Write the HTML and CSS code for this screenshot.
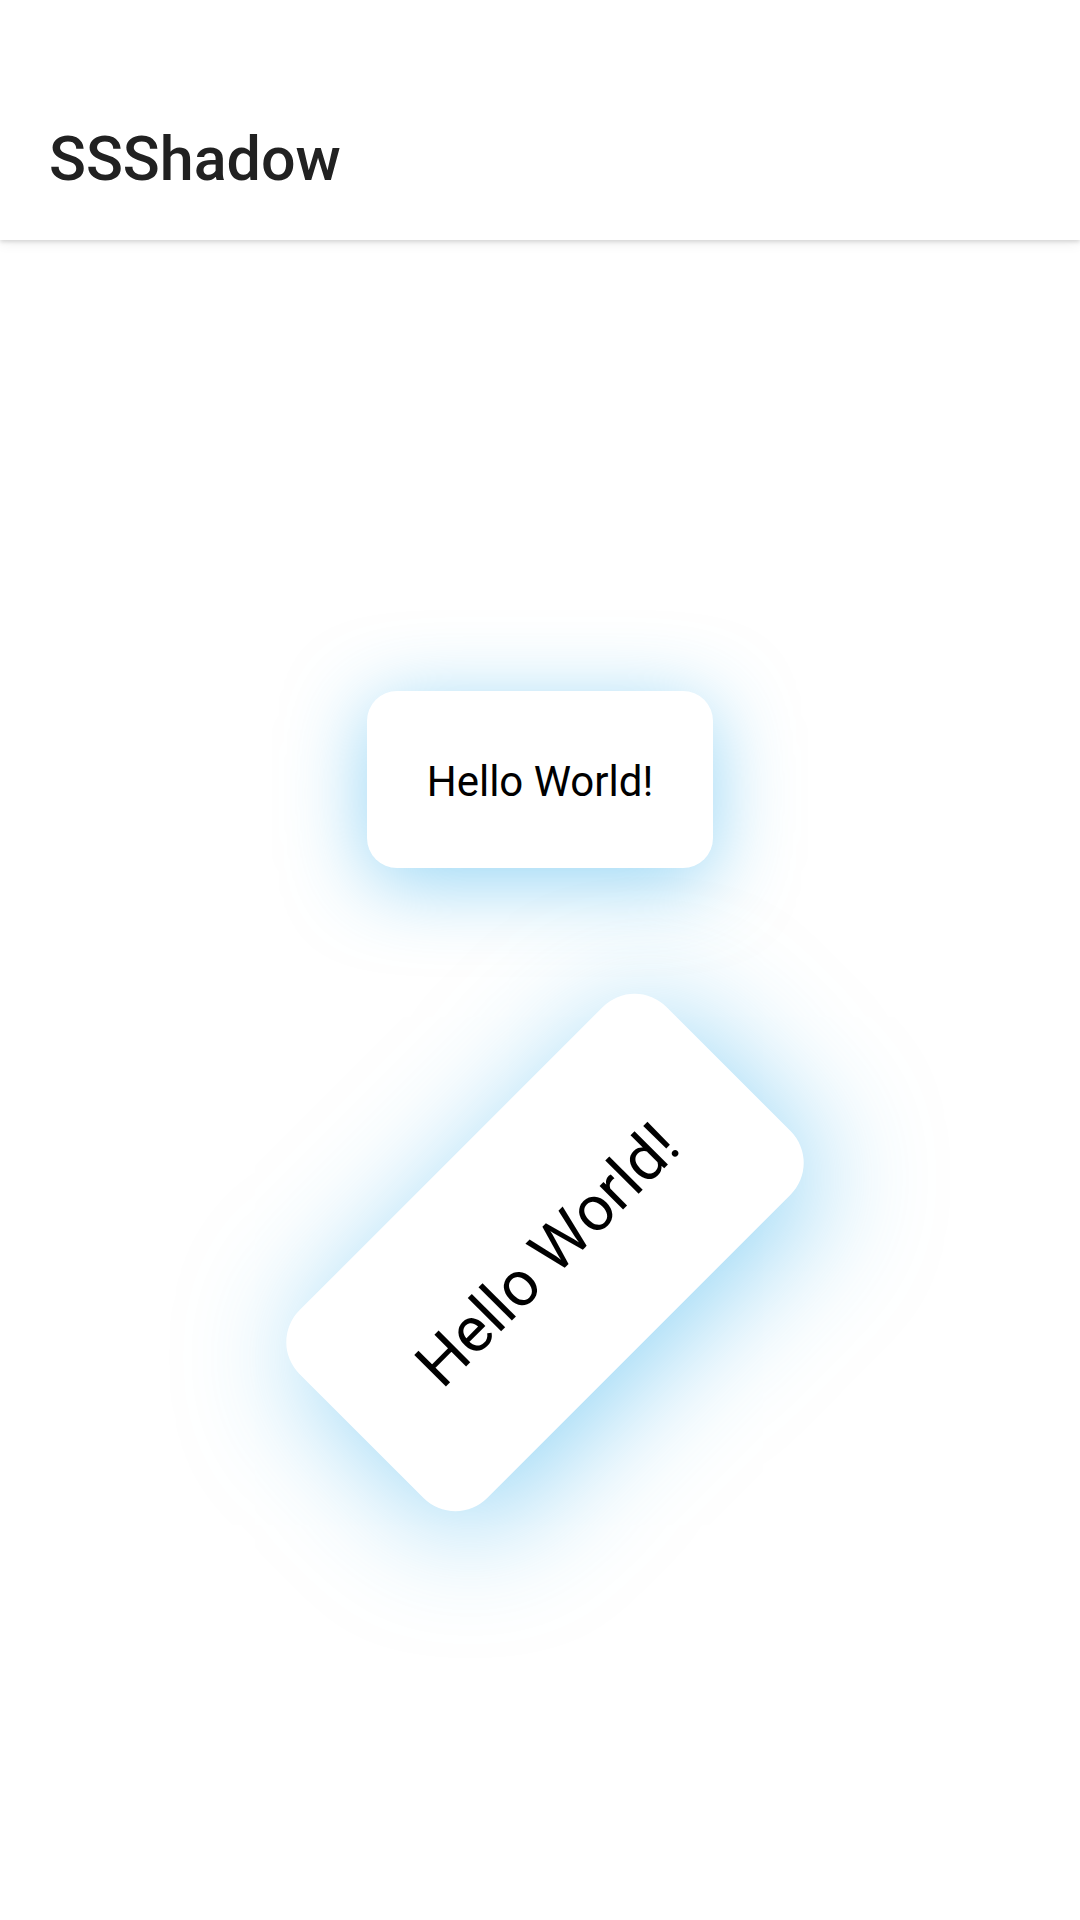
FILE: index.html
```html
<!DOCTYPE html>
<html>
<head>
<meta charset="utf-8">
<link rel="stylesheet" href="styles.css">
</head>
<body>
<header class="appbar">
  <div class="statusbar"></div>
  <div class="toolbar"><span class="title">SSShadow</span></div>
</header>
<main class="content">
  <div class="card card-flat"><span class="card-text">Hello World!</span></div>
  <div class="card card-rotated"><span class="card-text">Hello World!</span></div>
</main>
</body>
</html>
```
FILE: styles.css
```css
html, body {
  margin: 0;
  padding: 0;
  background: #ffffff;
}
body {
  width: 1080px;
  height: 1920px;
  overflow: hidden;
  font-family: Roboto, "Noto Sans", sans-serif;
  display: flex;
  flex-direction: column;
}
.appbar {
  background: #ffffff;
  box-shadow: 0 2px 4px rgba(0, 0, 0, 0.13), 0 4px 12px rgba(0, 0, 0, 0.06);
  position: relative;
  z-index: 2;
}
.statusbar {
  height: 72px;
}
.toolbar {
  height: 168px;
  box-sizing: border-box;
  padding-top: 6px;
  display: flex;
  align-items: center;
  padding-left: 49px;
}
.title {
  font-size: 61px;
  font-weight: 500;
  color: #212121;
}
.content {
  flex: 1;
  display: flex;
  flex-direction: column;
  align-items: center;
  padding-top: 451px;
}
.card {
  width: 346px;
  height: 177px;
  box-sizing: border-box;
  padding-top: 4px;
  background: #ffffff;
  border-radius: 30px;
  display: flex;
  align-items: center;
  justify-content: center;
  box-shadow: 0 14px 80px rgba(41, 171, 236, 0.5);
}
.card-text {
  font-size: 42px;
  color: #000000;
  white-space: nowrap;
}
.card-rotated {
  margin-top: 296px;
  margin-left: 10px;
  transform: rotate(-45deg) scale(1.5);
}
```
